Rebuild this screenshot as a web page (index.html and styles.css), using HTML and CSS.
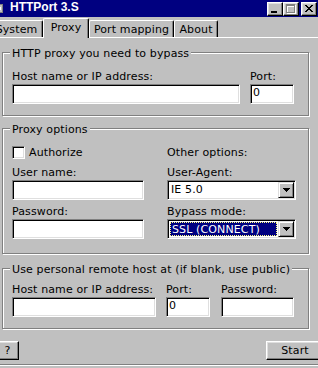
FILE: index.html
```html
<!DOCTYPE html>
<html lang="en">
<head>
    <meta charset="UTF-8">
    <title>HTTPort 3.S</title>
    <link rel="stylesheet" href="styles.css">
</head>
<body>

<div class="window">
    <div class="titlebar">
        <svg class="app-icon" width="14" height="14" viewBox="0 0 14 14" shape-rendering="crispEdges">
            <rect x="2" y="3" width="11" height="9" fill="#808080"/>
            <rect x="3" y="4" width="9" height="7" fill="#c0c0c0"/>
            <rect x="5" y="6" width="6" height="3" fill="#fff"/>
        </svg>
        <span class="title">HTTPort 3.S</span>
        <div class="title-buttons">
            <div class="tbtn">
                <svg width="14" height="12" viewBox="0 0 14 12" shape-rendering="crispEdges">
                    <rect x="3" y="8" width="6" height="2" fill="#000"/>
                </svg>
            </div>
            <div class="tbtn">
                <svg width="14" height="12" viewBox="0 0 14 12" shape-rendering="crispEdges">
                    <path d="M3 2h9v9h-9z M4 4v6h7v-6z" fill="#fff" fill-rule="evenodd"/>
                    <path d="M2 1h9v9h-9z M3 3v6h7v-6z" fill="#808080" fill-rule="evenodd"/>
                </svg>
            </div>
            <div class="tbtn tbtn-close">
                <svg width="14" height="12" viewBox="0 0 14 12" shape-rendering="crispEdges">
                    <g fill="#000">
                        <rect x="3" y="2" width="2" height="1"/><rect x="9" y="2" width="2" height="1"/>
                        <rect x="4" y="3" width="2" height="1"/><rect x="8" y="3" width="2" height="1"/>
                        <rect x="5" y="4" width="4" height="1"/>
                        <rect x="6" y="5" width="2" height="1"/>
                        <rect x="5" y="6" width="4" height="1"/>
                        <rect x="4" y="7" width="2" height="1"/><rect x="8" y="7" width="2" height="1"/>
                        <rect x="3" y="8" width="2" height="1"/><rect x="9" y="8" width="2" height="1"/>
                    </g>
                </svg>
            </div>
        </div>
    </div>

    <div class="tabs">
        <div class="tab tab-system">System</div>
        <div class="tab tab-proxy active">Proxy</div>
        <div class="tab tab-mapping">Port mapping</div>
        <div class="tab tab-about">About</div>
    </div>

    <div class="panel">
        <div class="group group-proxy">
            <div class="legend"><span>HTTP proxy you need to bypass</span></div>
            <div class="row row-proxy">
                <div class="field w-host1">
                    <label>Host name or IP address:</label>
                    <div class="edit"></div>
                </div>
                <div class="field w-port">
                    <label>Port:</label>
                    <div class="edit">0</div>
                </div>
            </div>
        </div>

        <div class="group group-options">
            <div class="legend"><span>Proxy options</span></div>
            <div class="options">
                <div class="check-row">
                    <div class="check"></div>
                    <span>Authorize</span>
                </div>
                <div>Other options:</div>

                <div class="field first">
                    <label>User name:</label>
                    <div class="edit"></div>
                </div>
                <div class="field first">
                    <label>User-Agent:</label>
                    <div class="combo">
                        <div class="combo-text">IE 5.0</div>
                        <div class="combo-btn">
                            <svg width="7" height="4" viewBox="0 0 7 4" shape-rendering="crispEdges"><path d="M0 0h7v1h-1v1h-1v1h-1v1h-1v-1h-1v-1h-1v-1h-1z" fill="#000"/></svg>
                        </div>
                    </div>
                </div>

                <div class="field next">
                    <label>Password:</label>
                    <div class="edit"></div>
                </div>
                <div class="field next">
                    <label>Bypass mode:</label>
                    <div class="combo">
                        <div class="combo-text selected">SSL (CONNECT)</div>
                        <div class="combo-btn">
                            <svg width="7" height="4" viewBox="0 0 7 4" shape-rendering="crispEdges"><path d="M0 0h7v1h-1v1h-1v1h-1v1h-1v-1h-1v-1h-1v-1h-1z" fill="#000"/></svg>
                        </div>
                    </div>
                </div>
            </div>
        </div>

        <div class="group group-remote">
            <div class="legend"><span>Use personal remote host at (if blank, use public)</span></div>
            <div class="row row-remote">
                <div class="field w-host2">
                    <label>Host name or IP address:</label>
                    <div class="edit"></div>
                </div>
                <div class="field w-port">
                    <label>Port:</label>
                    <div class="edit">0</div>
                </div>
                <div class="field w-pass">
                    <label>Password:</label>
                    <div class="edit"></div>
                </div>
            </div>
        </div>

        <div class="buttons">
            <div class="btn btn-help">?</div>
            <div class="btn btn-start">Start</div>
        </div>
    </div>

    <div class="bottom-line"></div>
</div>

</body>
</html>
```

FILE: styles.css
```css
body {
    margin: 0;
    background-color: #c0c0c0;
    font-family: "DejaVu Sans", Verdana, sans-serif;
    font-size: 11px;
    line-height: 13px;
    letter-spacing: 0.12px;
    color: #000;
    overflow: hidden;
}
.window {
    margin-left: -12px;
    width: 334px;
}

/* title bar */
.titlebar {
    display: flex;
    align-items: flex-start;
    height: 17px;
    margin-right: 3px;
    padding: 0 2px;
    background-color: #000080;
    color: #fff;
}
.app-icon {
    display: block;
    margin-top: 1px;
}
.title {
    margin-left: 6px;
    font-family: "Liberation Sans", Arial, sans-serif;
    font-weight: bold;
    font-size: 12px;
    line-height: 14px;
    letter-spacing: 0;
}
.title-buttons {
    display: flex;
    margin-left: auto;
    margin-top: 2px;
}
.tbtn {
    box-sizing: border-box;
    width: 16px;
    height: 14px;
    background-color: #c0c0c0;
    border: 1px solid;
    border-color: #fff #000 #000 #fff;
    box-shadow: inset -1px -1px #808080, inset 1px 1px #dfdfdf;
}
.tbtn svg {
    display: block;
}
.tbtn-close {
    margin-left: 2px;
}

/* tabs */
.tabs {
    display: flex;
    align-items: flex-end;
    height: 20px;
    padding-left: 2px;
}
.tab {
    box-sizing: border-box;
    height: 17px;
    padding-top: 2px;
    text-align: center;
    white-space: nowrap;
    border-top: 1px solid #fff;
    border-left: 1px solid #fff;
    border-right: 1px solid #000;
    border-radius: 2px 2px 0 0;
    box-shadow: inset -1px 0 #808080;
}
.tab-system { width: 53px; }
.tab-proxy { width: 46px; }
.tab-mapping { width: 85px; }
.tab-about { width: 44px; }
.tab.active {
    position: relative;
    z-index: 1;
    height: 20px;
    margin-bottom: -1px;
    background-color: #c0c0c0;
}

/* page */
.panel {
    border-top: 1px solid #fff;
    border-left: 1px solid #fff;
    padding: 14px 0 0 13px;
}
.group {
    box-sizing: border-box;
    width: 307px;
    padding-left: 9px;
    border: 1px solid #808080;
    box-shadow: inset 1px 1px #fff, 1px 1px #fff;
}
.group-proxy { height: 64px; }
.group-options { height: 126px; margin-top: 12px; }
.group-remote { height: 61px; margin-top: 14px; }

.legend {
    margin-top: -6px;
}
.legend span {
    display: inline-block;
    margin-left: -2px;
    padding: 0 2px;
    background-color: #c0c0c0;
}

.row {
    display: flex;
}
.row-proxy {
    margin-top: 10px;
    gap: 10px;
}
.row-remote {
    margin-top: 7px;
    gap: 10px;
}
.field label {
    display: block;
    margin-bottom: 1px;
    white-space: nowrap;
}
.w-host1 { width: 228px; }
.w-host2 { width: 144px; }
.w-port { width: 44px; }
.w-pass { width: 73px; margin-left: 1px; }

.edit {
    box-sizing: border-box;
    height: 20px;
    padding: 1px 2px;
    background-color: #fff;
    border: 1px solid;
    border-color: #808080 #fff #fff #808080;
    box-shadow: inset 1px 1px #000, inset -1px -1px #dfdfdf;
}

.options {
    display: grid;
    grid-template-columns: 132px 129px;
    column-gap: 23px;
    margin-top: 10px;
}
.options .first { margin-top: 7px; }
.options .next { margin-top: 5px; }

.check-row {
    display: flex;
    align-items: flex-start;
    gap: 4px;
}
.check {
    box-sizing: border-box;
    width: 13px;
    height: 13px;
    background-color: #fff;
    border: 1px solid;
    border-color: #808080 #fff #fff #808080;
    box-shadow: inset 1px 1px #000, inset -1px -1px #dfdfdf;
}

.combo {
    box-sizing: border-box;
    display: flex;
    height: 20px;
    padding: 1px;
    background-color: #fff;
    border: 1px solid;
    border-color: #808080 #fff #fff #808080;
    box-shadow: inset 1px 1px #000, inset -1px -1px #dfdfdf;
}
.combo-text {
    flex: 1;
    padding: 1px 0 0 2px;
    white-space: nowrap;
}
.combo-text.selected {
    box-sizing: border-box;
    margin: 1px;
    padding: 0 0 0 1px;
    background-color: #000080;
    color: #fff;
    border: 1px dotted #ffff80;
}
.combo-btn {
    box-sizing: border-box;
    display: flex;
    align-items: center;
    justify-content: center;
    width: 16px;
    height: 16px;
    background-color: #c0c0c0;
    border: 1px solid;
    border-color: #dfdfdf #000 #000 #dfdfdf;
    box-shadow: inset 1px 1px #fff, inset -1px -1px #808080;
}
.combo-btn svg {
    display: block;
}

.buttons {
    display: flex;
    justify-content: space-between;
    margin: 12px -2px 0 -6px;
}
.btn {
    box-sizing: border-box;
    height: 19px;
    padding-top: 2px;
    text-align: center;
    border: 1px solid;
    border-color: #fff #000 #000 #fff;
    box-shadow: inset -1px -1px #808080, inset 1px 1px #dfdfdf;
}
.btn-help { width: 23px; }
.btn-start { width: 58px; }

.bottom-line {
    margin-top: 4px;
    border-top: 1px solid #808080;
    border-bottom: 1px solid #fff;
}
```
